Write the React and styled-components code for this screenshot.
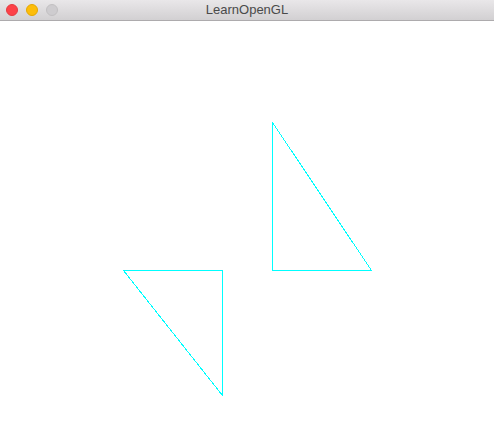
import React from 'react';
import styled, { createGlobalStyle } from 'styled-components';

const Global = createGlobalStyle`
  html, body { margin: 0; padding: 0; background: #fff; }
  body { width: 494px; height: 422px; overflow: hidden; }
`;

const Window = styled.div`
  width: 494px;
  height: 422px;
  display: flex;
  flex-direction: column;
  background: #fff;
`;

const TitleBar = styled.div`
  position: relative;
  height: 20px;
  flex: none;
  display: flex;
  align-items: center;
  justify-content: center;
  background: linear-gradient(#e9e7e9, #d2d0d2);
  border-bottom: 1px solid #adabad;
`;

const Lights = styled.div`
  position: absolute;
  left: 6px;
  top: 4px;
  display: flex;
  gap: 8px;
`;

const Light = styled.span`
  width: 12px;
  height: 12px;
  border-radius: 50%;
  box-sizing: border-box;
  background: ${p => p.color};
  border: 1px solid ${p => p.edge};
`;

const Title = styled.span`
  font-family: "Liberation Sans", Arial, sans-serif;
  font-size: 13px;
  color: #4a4a4a;
  line-height: 20px;
`;

const Canvas = styled.svg`
  display: block;
  flex: 1;
  width: 494px;
`;

const triangles = [
  '272.5,101.5 272.5,249.5 371.5,249.5',
  '123.5,249.5 222.5,249.5 222.5,374.5',
];

export default function App() {
  return (
    <>
      <Global />
      <Window>
        <TitleBar>
          <Lights>
            <Light color="#fd4148" edge="#e53a40" />
            <Light color="#fdbd0a" edge="#e5a800" />
            <Light color="#cecccf" edge="#c2c0c2" />
          </Lights>
          <Title>LearnOpenGL</Title>
        </TitleBar>
        <Canvas viewBox="0 0 494 401" shapeRendering="crispEdges">
          {triangles.map(pts => (
            <polygon key={pts} points={pts} fill="none" stroke="#00ffff" strokeWidth="1" />
          ))}
        </Canvas>
      </Window>
    </>
  );
}
